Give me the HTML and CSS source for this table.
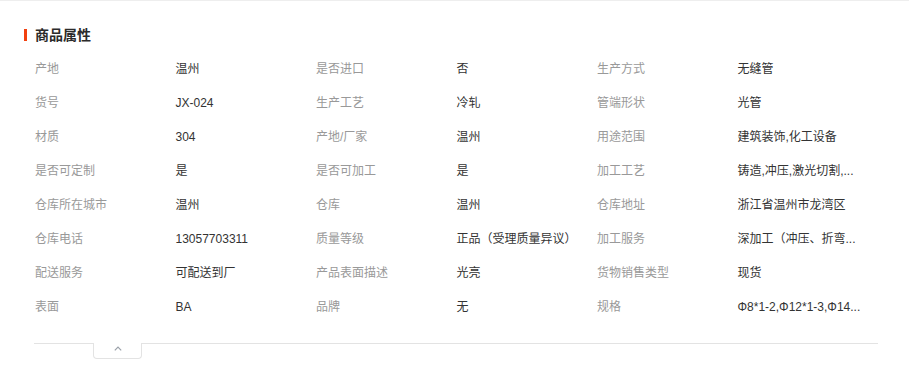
FILE: index.html
```html
<!DOCTYPE html>
<html lang="zh-CN">
<head>
<meta charset="utf-8">
<title>商品属性</title>
<link rel="stylesheet" href="styles.css">
</head>
<body>
<div class="card">
  <div class="head"><span class="bar"></span><h2 class="title">商品属性</h2></div>
  <div class="grid">
    <div class="k">产地</div><div class="v">温州</div>
    <div class="k">是否进口</div><div class="v">否</div>
    <div class="k">生产方式</div><div class="v">无缝管</div>

    <div class="k">货号</div><div class="v">JX-024</div>
    <div class="k">生产工艺</div><div class="v">冷轧</div>
    <div class="k">管端形状</div><div class="v">光管</div>

    <div class="k">材质</div><div class="v">304</div>
    <div class="k">产地/厂家</div><div class="v">温州</div>
    <div class="k">用途范围</div><div class="v">建筑装饰,化工设备</div>

    <div class="k">是否可定制</div><div class="v">是</div>
    <div class="k">是否可加工</div><div class="v">是</div>
    <div class="k">加工工艺</div><div class="v">铸造,冲压,激光切割,...</div>

    <div class="k">仓库所在城市</div><div class="v">温州</div>
    <div class="k">仓库</div><div class="v">温州</div>
    <div class="k">仓库地址</div><div class="v">浙江省温州市龙湾区</div>

    <div class="k">仓库电话</div><div class="v">13057703311</div>
    <div class="k">质量等级</div><div class="v">正品（受理质量异议）</div>
    <div class="k">加工服务</div><div class="v">深加工（冲压、折弯...</div>

    <div class="k">配送服务</div><div class="v">可配送到厂</div>
    <div class="k">产品表面描述</div><div class="v">光亮</div>
    <div class="k">货物销售类型</div><div class="v">现货</div>

    <div class="k">表面</div><div class="v">BA</div>
    <div class="k">品牌</div><div class="v">无</div>
    <div class="k">规格</div><div class="v">Φ8*1-2,Φ12*1-3,Φ14...</div>
  </div>
  <div class="foot">
    <button class="toggle" type="button" aria-label="收起">
      <svg width="8" height="5" viewBox="0 0 8 5"><path d="M0.8 4.3 L4 1.1 L7.2 4.3" fill="none" stroke="#9aa0a8" stroke-width="1.2"/></svg>
    </button>
  </div>
</div>
</body>
</html>
```
FILE: styles.css
```css
html, body {
  margin: 0;
  padding: 0;
  background: #fff;
}
body {
  font-family: "Liberation Sans", "Noto Sans CJK SC", sans-serif;
  font-size: 12px;
  color: #333;
}
.card {
  border-top: 1px solid #eeeeee;
  height: 366px;
}
.head {
  display: flex;
  align-items: center;
  padding: 26px 0 0 24px;
  height: 16px;
}
.bar {
  width: 3px;
  height: 12px;
  background: #f2400f;
  margin-right: 8px;
}
.title {
  margin: 0;
  font-size: 14px;
  line-height: 16px;
  font-weight: bold;
  color: #2b2b2b;
}
.grid {
  margin: 9px 31px 0 35px;
  display: grid;
  grid-template-columns: repeat(6, 1fr);
  grid-auto-rows: 34px;
  align-items: center;
}
.k {
  color: #999;
  line-height: 16px;
  white-space: nowrap;
}
.v {
  color: #333;
  line-height: 16px;
  white-space: nowrap;
}
.foot {
  margin: 19px 31px 0 34px;
  border-top: 1px solid #e3e3e3;
}
.toggle {
  display: flex;
  align-items: center;
  justify-content: center;
  margin: -1px 0 0 59px;
  width: 49px;
  height: 16px;
  padding: 0 0 4px;
  background: #fff;
  border: 1px solid #e3e3e3;
  border-top: none;
  border-radius: 0 0 4px 4px;
}
```
